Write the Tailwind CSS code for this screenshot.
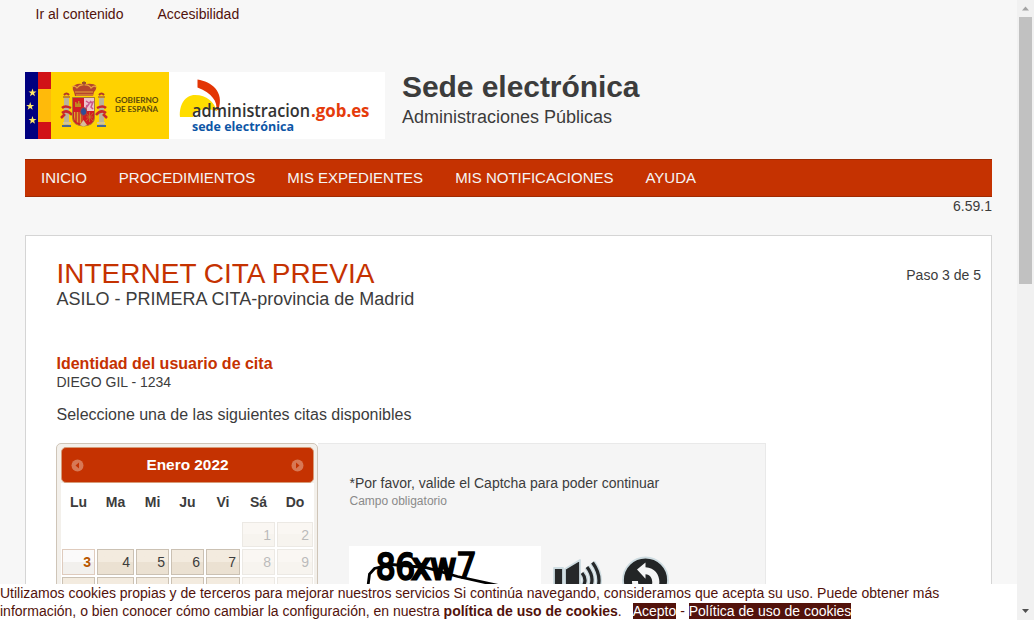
<!DOCTYPE html>
<html lang="es">
<head>
<meta charset="utf-8">
<title>Sede electrónica</title>
<script src="https://cdn.jsdelivr.net/npm/@tailwindcss/browser@4"></script>
</head>
<body class="flex h-[620px] w-[1034px] overflow-hidden bg-[#f7f7f7] font-['Liberation_Sans',Arial,sans-serif] text-[#3c3c3c]">
<div class="flex w-[1017px] flex-col">
  <div class="h-[584px] overflow-hidden pl-[25px] pr-[25px]">
    <div class="flex h-[72px] gap-[34px] pl-[10.500px] pt-[5px] text-[14px] leading-[18px] text-[#52120b]">
      <a class="whitespace-nowrap">Ir al contenido</a><a>Accesibilidad</a>
    </div>
    <header class="flex h-[87px] gap-[17px]">
      <svg width="360" height="67" viewBox="25 72 360 67" class="shrink-0">
        <rect x="25" y="72" width="144" height="67" fill="#ffd200"/>
        <rect x="25" y="72" width="13" height="67" fill="#000080"/>
        <rect x="38" y="72" width="13" height="67" fill="#d11217"/>
        <rect x="38" y="89" width="13" height="33" fill="#ffba0a"/>
        <g fill="#ffe867">
          <path id="st" d="M32.500 88.500l1 2.900h3l-2.400 1.900.9 3-2.500-1.800-2.500 1.800.9-3-2.400-1.900h3z"/>
          <use href="#st" x="-2.300" y="13.500"/><use href="#st" y="27.500"/>
        </g>
        <g>
          <path d="M74 92q-3-5 1-7 3-2 7-1v-2h4v2q8-1 10 2 1 3-2 6l-1 4H75z" fill="#b5452c"/>
          <path d="M72 87q3-2 5 1 3-4 7-3 5-1 7 3 3-3 5-1M75 92h18M76 95h17" fill="none" stroke="#e9a33d" stroke-width="1.200"/>
          <path d="M84 81v5M82 82.500h4" stroke="#8f5430" stroke-width="1"/>
          <rect x="64" y="97" width="5" height="28" fill="#b9b49b"/><rect x="99" y="97" width="5" height="28" fill="#b9b49b"/>
          <path d="M63 97h7M98 97h7" stroke="#c58628" stroke-width="2"/>
          <path d="M64 95q2.500-3 5 0M99 95q2.500-3 5 0" fill="none" stroke="#b33828" stroke-width="2"/>
          <path d="M62 108q3-3 9 0M62 113q5-4 10 2M61 118l4-4M106 108q-3-3-9 0M106 113q-5-4-10 2M107 118l-4-4" fill="none" stroke="#c9282a" stroke-width="2.500"/>
          <path d="M63 123h8M97 123h8" stroke="#d6c68e" stroke-width="2"/><path d="M62 126h9M97 126h9" stroke="#4a678e" stroke-width="2"/>
          <path d="M72.500 97.500h22v20q0 8-11 8.500-11-.5-11-8.500z" fill="#d21c24" stroke="#a57b35" stroke-width="1"/>
          <path d="M84 98h10v13H84z" fill="#ecc4cf"/>
          <path d="M86 108l5-7M86 101l3 2 4-1-2 5 2 2M87 105l-1 4" fill="none" stroke="#c9568b" stroke-width="1.500"/>
          <path d="M75 107v-5h1.500v1.500h1.500V101h1.500v2.500H81V107z" fill="#c18a20"/>
          <path d="M74 112h9v12q-9-1-9-7z" fill="#dba32c"/><path d="M76 112v10M79 112v12M82 112v12" stroke="#c61c24" stroke-width="1.300"/>
          <path d="M86 113l7 8M93 113l-7 8M86 117h7M89.500 112v10" stroke="#c18a20" stroke-width=".7"/>
          <ellipse cx="83.600" cy="111.500" rx="3.200" ry="4" fill="#304f96" stroke="#b73b32"/>
          <path d="M80 125l3.500-5 3.500 5-3.500 1.500z" fill="#d8bd9b"/>
        </g>
        <g font-family="Lato, sans-serif" font-size="8.200" font-weight="700" fill="#5c4a0b">
          <text x="115" y="103" textLength="43.500" lengthAdjust="spacingAndGlyphs">GOBIERNO</text>
          <text x="115" y="111.800" textLength="43" lengthAdjust="spacingAndGlyphs">DE ESPAÑA</text>
        </g>
        <rect x="169" y="72" width="216" height="67" fill="#fff"/>
        <path d="M180 117c-1-12 5-22 15-22 12 0 19 7 22 16-12-4-23-1-24 6z" fill="#fd0"/>
        <path d="M197.500 79.500c14 2 27 12 21 30l-2 1c1-9-4-17-19-23z" fill="#e33505"/>
        <g font-family="'Open Sans','Noto Sans',sans-serif">
          <text x="192" y="117" font-size="18" font-weight="600" fill="#333" textLength="118" lengthAdjust="spacingAndGlyphs">administracion</text>
          <text x="311" y="117" font-size="18" font-weight="700" fill="#e53b0b" textLength="58.500" lengthAdjust="spacingAndGlyphs">.gob.es</text>
          <text x="192" y="130.500" font-size="13" font-weight="700" fill="#0d56a6" textLength="102" lengthAdjust="spacingAndGlyphs">sede electrónica</text>
        </g>
      </svg>
      <div>
        <h1 class="text-[30px] font-bold leading-[30px] tracking-[-0.060px]">Sede electrónica</h1>
        <p class="mt-[4px] text-[18px] leading-[22px]">Administraciones Públicas</p>
      </div>
    </header>
    <nav class="flex h-[38px] gap-[32px] border-y border-[#9f2a02] bg-[#c53201] pl-[16px] text-[15px] leading-[36px] text-[#f5f5f5]">
      <a>INICIO</a><a>PROCEDIMIENTOS</a><a>MIS EXPEDIENTES</a><a>MIS NOTIFICACIONES</a><a>AYUDA</a>
    </nav>
    <p class="h-[38px] text-right text-[14px] leading-[18px]">6.59.1</p>
    <main class="h-[420px] border border-[#d5d5d5] bg-white pl-[30px] pr-[10px] pt-[23px]">
      <div class="flex h-[95px] justify-between">
        <div class="pl-[0.500px]">
          <h2 class="pt-px text-[28px] leading-[28px] text-[#c53201]">INTERNET CITA PREVIA</h2>
          <p class="text-[18px] leading-[22px]">ASILO - PRIMERA CITA-provincia de Madrid</p>
        </div>
        <p class="pt-[7px] text-[14px] leading-[18px]">Paso 3 de 5</p>
      </div>
      <h3 class="pl-[0.500px] text-[16px] font-bold leading-[20px] text-[#c53201]">Identidad del usuario de cita</h3>
      <p class="-mt-px pl-[0.500px] text-[14px] leading-[18px]">DIEGO GIL - 1234</p>
      <p class="mt-[14px] h-[38px] pl-[0.500px] text-[16px] leading-[20px]">Seleccione una de las siguientes citas disponibles</p>
      <div class="flex h-[200px] w-[710px]">
        <div class="h-full w-[262px] shrink-0 rounded-[5px] border border-[#cfc5b8] bg-[#f3f0eb] pl-[4px] pr-[3px] pt-[3px]">
          <div class="flex h-[36px] items-center justify-between rounded-[5px] border border-[#d79b78] bg-[#c53201] px-[9px] text-[15.400px] font-bold text-white">
            <svg width="13" height="13" viewBox="0 0 13 13"><circle cx="6.500" cy="6.500" r="6" fill="#d77855"/><path d="M8 3.500v6L4.500 6.500z" fill="#c53201"/></svg>
            <span>Enero 2022</span>
            <svg width="13" height="13" viewBox="0 0 13 13"><circle cx="6.500" cy="6.500" r="6" fill="#d77855"/><path d="M5 3.500v6l3.500-3z" fill="#c53201"/></svg>
          </div>
          <div class="bg-white pl-px">
            <div class="grid h-[39px] grid-cols-[33px_37px_33px_33px_34px_33px_36px] gap-x-[2px] text-center text-[14px] font-bold leading-[38px]">
              <span>Lu</span><span>Ma</span><span>Mi</span><span>Ju</span><span>Vi</span><span>Sá</span><span>Do</span>
            </div>
            <div class="grid grid-cols-[33px_37px_33px_33px_34px_33px_36px] grid-rows-[25px_26px_26px] gap-[2px] text-right text-[14px] leading-[24px] *:border *:border-[#cbc1b3] *:bg-linear-to-b *:from-[#f3ebdf] *:from-50% *:to-[#ebe1d2] *:to-50% *:pr-[3px]">
              <span class="col-start-6 opacity-35">1</span><span class="opacity-35">2</span>
              <span class="border-[#dfcbbd]! from-[#fbfafa]! to-[#f2f0ed]! font-bold text-[#b85700]">3</span><span>4</span><span>5</span><span>6</span><span>7</span><span class="opacity-35">8</span><span class="opacity-35">9</span>
              <span></span><span></span><span></span><span></span><span></span><span class="opacity-35"></span><span class="opacity-35"></span>
            </div>
          </div>
        </div>
        <div class="h-full flex-1 border border-l-0 border-[#e9e9e9] bg-[#f5f5f5] pl-[31px] pt-[30px]">
          <p class="pl-[0.500px] text-[14px] leading-[18px]">*Por favor, valide el Captcha para poder continuar</p>
          <p class="h-[54px] pl-[0.500px] text-[12px] leading-[18px] text-[#8a8a8a]">Campo obligatorio</p>
          <svg width="330" height="60" viewBox="349 546 330 60">
            <rect x="349" y="546" width="192" height="60" fill="#fff"/>
            <g font-family="'DejaVu Sans'" fill="#000" stroke="#000">
              <text x="376" y="579" font-size="35" stroke-width="2.400" textLength="39" lengthAdjust="spacingAndGlyphs">86</text>
              <text x="412" y="579" font-size="36" stroke-width="3" textLength="44" lengthAdjust="spacingAndGlyphs">xw</text>
              <text x="456" y="578" font-size="35" stroke-width="1.600" textLength="21" lengthAdjust="spacingAndGlyphs">7</text>
            </g>
            <path d="M368 586l1.500-12 5-5.500 17-4 34 3 32 9 41 9" fill="none" stroke="#000" stroke-width="2.800"/>
            <g stroke="#cedce1" stroke-width="1.800">
              <path d="M554 568h9v30h-9zM565 569l15-9v40l-15-11z" fill="#262829" stroke-linejoin="round"/>
              <path d="M582 573q6 7 0 15M587 567q10 13 0 25M592.500 562.500q13 18 0 35" fill="none" stroke-width="6"/>
              <path d="M582 573q6 7 0 15M587 567q10 13 0 25M592.500 562.500q13 18 0 35" fill="none" stroke="#262829" stroke-width="3.200"/>
              <circle cx="645.500" cy="580" r="22.500" fill="#232526"/>
            </g>
            <path d="M637 569.500l8.500-7v4.700c19 1 18 29 0 29v-6c9 0 9-16 0-16v4.500z" fill="#f5f5f5"/>
            <path d="M632 581h6q0 7 6 9v6q-12-3-12-15z" fill="#f5f5f5"/>
          </svg>
        </div>
      </div>
    </main>
  </div>
  <footer class="h-[36px] whitespace-nowrap bg-white text-[14px] leading-[18px] text-[#52120b]">
    <p>Utilizamos cookies propias y de terceros para mejorar nuestros servicios Si continúa navegando, consideramos que acepta su uso. Puede obtener más</p>
    <p>información, o bien conocer cómo cambiar la configuración, en nuestra <b>política de uso de cookies</b>. &nbsp; <a class="bg-[#52120b] text-white">Acepto</a> - <a class="bg-[#52120b] text-white">Política de uso de cookies</a></p>
  </footer>
</div>
<aside class="flex w-[17px] flex-col items-center justify-between bg-[#f1f1f1]">
  <svg width="17" height="17"><path d="M5 10.500h7L8.500 6.500z" fill="#a3a3a3"/></svg>
  <div class="mb-auto h-[267px] w-[13px] bg-[#c1c1c1]"></div>
  <svg width="17" height="17"><path d="M5 6h7l-3.500 4z" fill="#505050"/></svg>
</aside>
</body>
</html>
